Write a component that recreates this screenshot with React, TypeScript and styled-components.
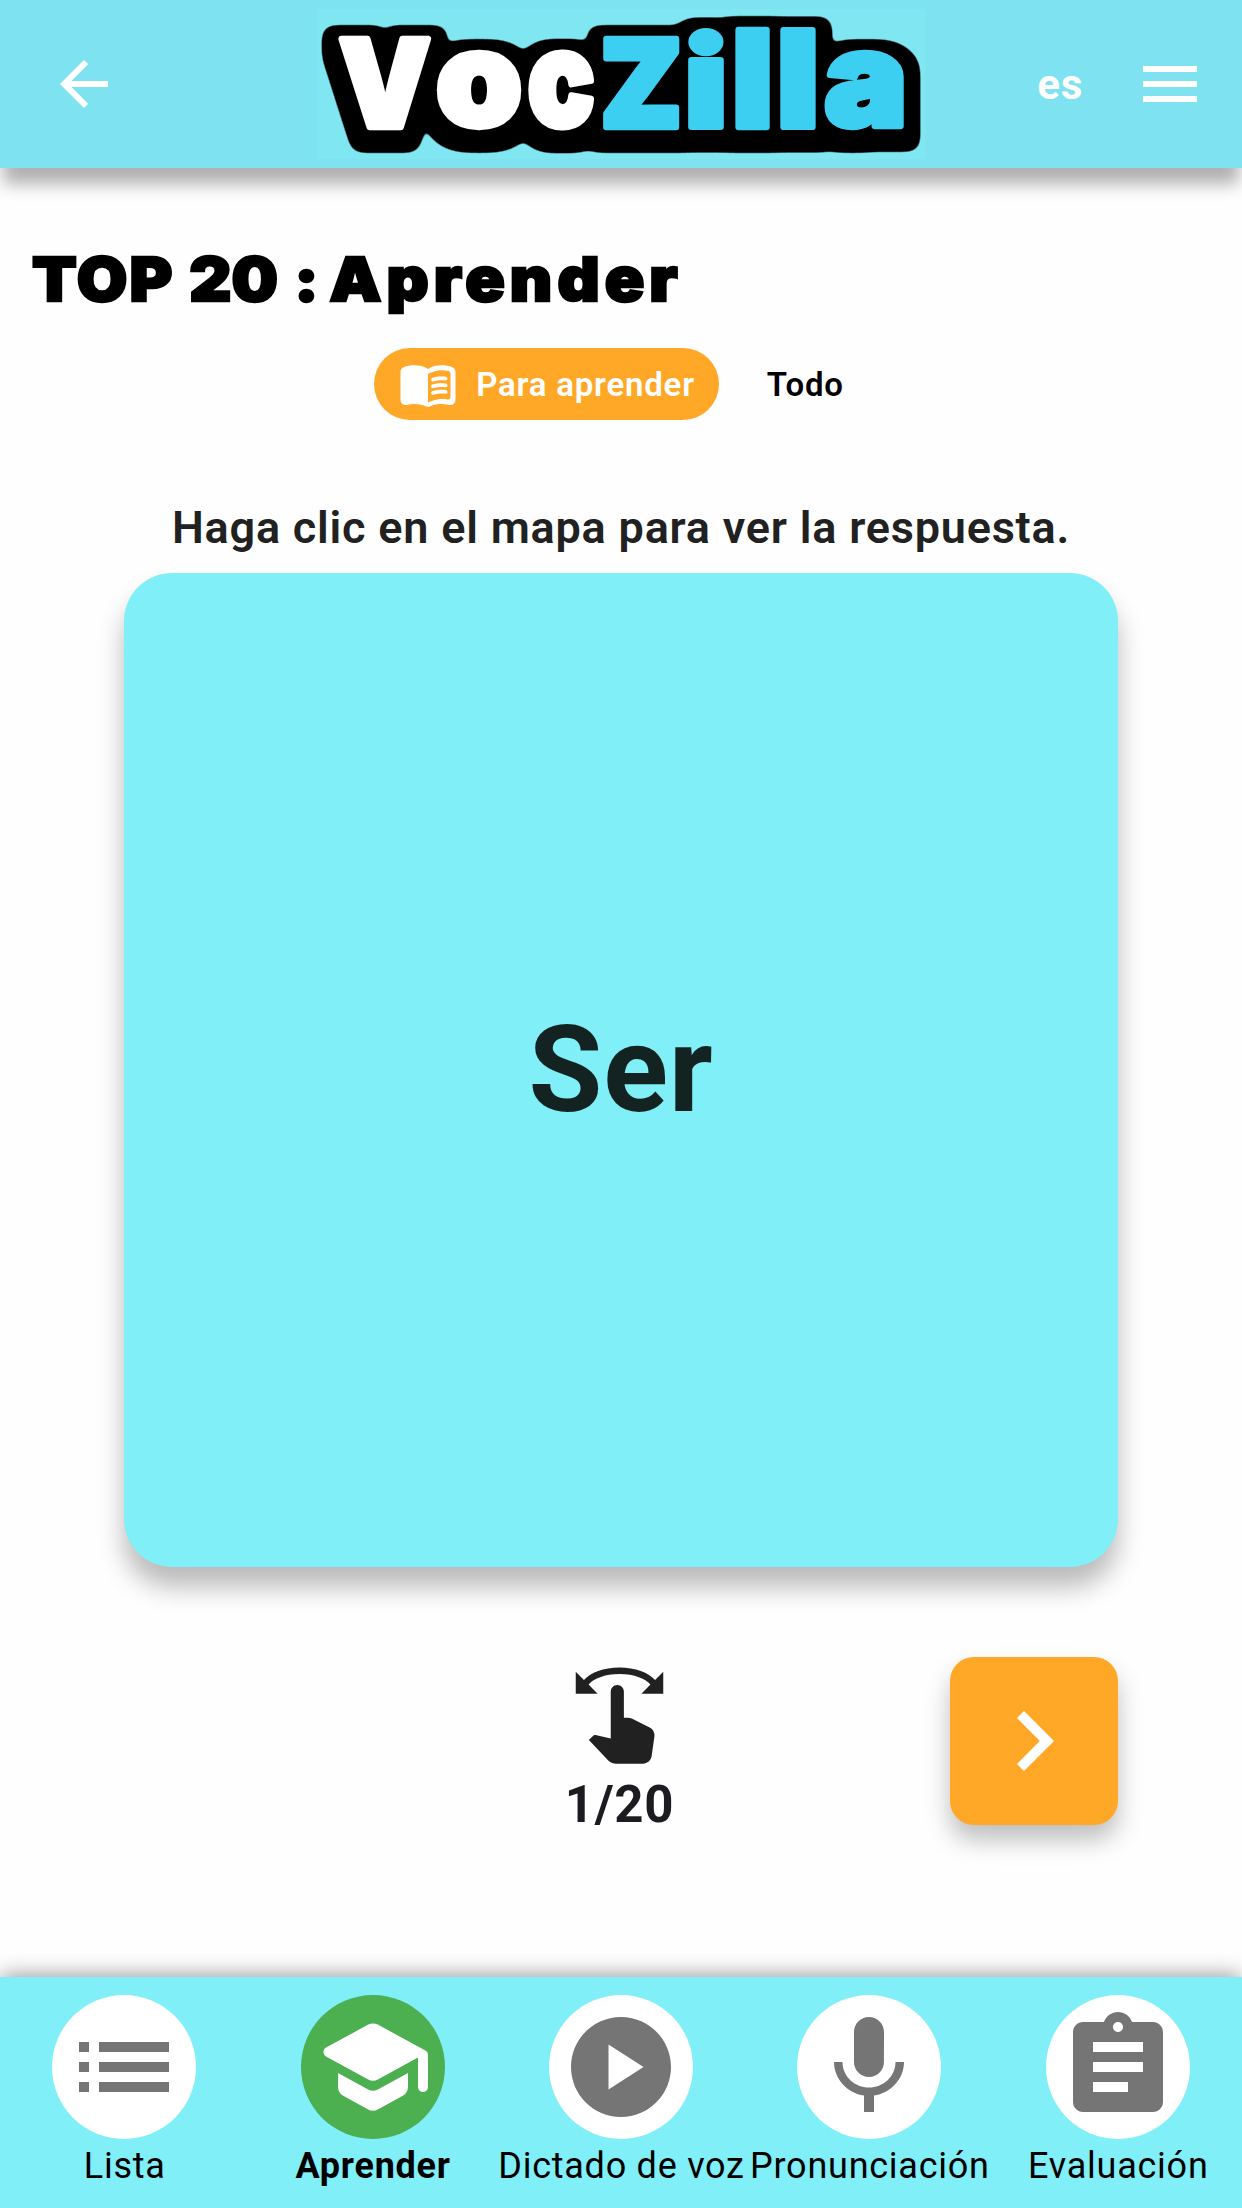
import React, { useMemo } from 'react';
import styled, { createGlobalStyle } from 'styled-components';

const GlobalStyle = createGlobalStyle`
  *, *::before, *::after { box-sizing: border-box; }
  html, body { margin: 0; padding: 0; background: #fefefe; }
  body { font-family: Roboto, sans-serif; letter-spacing: 0.75px; }
  button { font: inherit; letter-spacing: inherit; color: inherit; background: none; border: 0; padding: 0; }
`;

const Screen = styled.div`
  width: 1242px;
  height: 2208px;
  display: flex;
  flex-direction: column;
  background: #fefefe;
  overflow: hidden;
`;

const Header = styled.header`
  height: 168px;
  flex: none;
  display: grid;
  grid-template-columns: 317px 608px 1fr;
  align-items: center;
  background: #7ee2f0;
  box-shadow: 0 19px 16px -3px rgba(0, 0, 0, 0.31);
`;

const BackButton = styled.button`
  display: flex;
  margin-left: 48px;
  color: #fff;
`;

const LogoPlate = styled.div`
  height: 150px;
  display: flex;
  background: #80e7f2;
`;

const HeaderActions = styled.div`
  display: flex;
  align-items: center;
  justify-content: flex-end;
  padding-right: 36px;
  gap: 51px;
  color: #fff;
`;

const Language = styled.span`
  font-size: 42px;
  line-height: 48px;
  font-weight: 700;
  padding-top: 2px;
`;

const Icon = styled.svg<{ $size: number }>`
  width: ${(p) => p.$size}px;
  height: ${(p) => p.$size}px;
  display: block;
  flex: none;
  fill: currentColor;
`;

const Main = styled.main`
  flex: 1;
  display: flex;
  flex-direction: column;
  align-items: center;
`;

const Title = styled.h1`
  align-self: stretch;
  margin: 69px 0 0 32px;
  height: 84px;
  display: flex;
  font-family: Inter, sans-serif;
  font-weight: 900;
  font-size: 61px;
  line-height: 84px;
  color: #000;
  white-space: pre;
  -webkit-text-stroke: 2.5px #000;
  stroke-linejoin: round;
  paint-order: stroke fill;
  transform: scaleX(1.07);
  transform-origin: left center;
`;

const Word = styled.span<{ $spacing: number; $width: number }>`
  width: ${(p) => p.$width}px;
  letter-spacing: ${(p) => p.$spacing}px;
`;

const Filters = styled.div`
  margin-top: 27px;
  display: flex;
  gap: 24px;
`;

const Chip = styled.button<{ $active?: boolean }>`
  height: 72px;
  padding: 0 24px;
  display: flex;
  align-items: center;
  gap: 18px;
  border-radius: 36px;
  background: ${(p) => (p.$active ? '#ffa828' : 'transparent')};
  color: ${(p) => (p.$active ? '#fff' : '#000')};
  font-size: 33px;
  font-weight: 600;
  letter-spacing: 0.8px;
`;

const Hint = styled.p`
  margin: 78px 0 0;
  height: 75px;
  line-height: 60px;
  font-size: 45px;
  font-weight: 600;
  letter-spacing: 0.79px;
  color: #212121;
  white-space: nowrap;
`;

const Card = styled.section`
  width: 993.6px;
  height: 993.6px;
  flex: none;
  display: flex;
  align-items: center;
  justify-content: center;
  border-radius: 48px;
  background: #80eff7;
  box-shadow: 0 20px 26px rgba(0, 0, 0, 0.27);
  color: #122322;
  font-size: 120px;
  font-weight: 700;
`;

const Controls = styled.div`
  width: 993.6px;
  margin-top: 90px;
  display: grid;
  grid-template-columns: 168px 1fr 168px;
  align-items: start;
`;

const Progress = styled.div`
  grid-column: 2;
  padding: 6px 3px 0 0;
  display: flex;
  flex-direction: column;
  align-items: center;
  color: #212121;
`;

const Counter = styled.span`
  margin-top: 1px;
  font-size: 51px;
  line-height: 72px;
  font-weight: 700;
  color: #1c1b1f;
`;

const NextButton = styled.button`
  width: 168px;
  height: 168px;
  display: flex;
  align-items: center;
  justify-content: center;
  border-radius: 24px;
  background: #ffa828;
  color: #fff;
  box-shadow: 0 15px 24px rgba(0, 0, 0, 0.25);
`;

const NavBar = styled.nav`
  height: 231px;
  flex: none;
  display: grid;
  grid-template-columns: repeat(5, 1fr);
  padding-top: 18px;
  background: #80eff7;
  box-shadow: 0 -3px 20px -1px rgba(0, 0, 0, 0.4);
`;

const NavItem = styled.div`
  min-width: 0;
  display: flex;
  flex-direction: column;
  align-items: center;
`;

const NavCircle = styled.div<{ $active?: boolean }>`
  width: 144px;
  height: 144px;
  display: flex;
  align-items: center;
  justify-content: center;
  border-radius: 50%;
  background: ${(p) => (p.$active ? '#4caf50' : '#fff')};
  color: ${(p) => (p.$active ? '#fff' : '#757575')};
`;

const NavLabel = styled.span<{ $active?: boolean }>`
  margin: 2px 0 0 1px;
  font-size: 36px;
  line-height: 51px;
  font-weight: ${(p) => (p.$active ? 700 : 400)};
  color: #000;
  white-space: nowrap;
`;

const PATHS = {
  back: 'M20 11H7.83l5.59-5.59L12 4l-8 8 8 8 1.41-1.41L7.83 13H20v-2z',
  menu: 'M3 18h18v-2H3v2zm0-5h18v-2H3v2zm0-7v2h18V6H3z',
  book:
    'M17.5 4.5c-1.95 0-4.05.4-5.5 1.5-1.45-1.1-3.55-1.5-5.5-1.5-1.45 0-2.99.22-4.28.79C1.49 5.62 1 6.33 1 7.14v11.28c0 1.3 1.22 2.26 2.48 1.94.98-.25 2.02-.36 3.02-.36 1.56 0 3.22.26 4.56.92.6.3 1.28.3 1.87 0 1.34-.67 3-.92 4.56-.92 1 0 2.04.11 3.02.36 1.26.33 2.48-.63 2.48-1.94V7.14c0-.81-.49-1.52-1.22-1.85-1.28-.57-2.82-.79-4.27-.79zM21 17.23c0 .63-.58 1.09-1.2.98-.75-.14-1.53-.2-2.3-.2-1.7 0-4.15.65-5.5 1.5V8c1.35-.85 3.8-1.5 5.5-1.5.92 0 1.83.09 2.7.28.46.1.8.51.8.98v9.47z' +
    ['11.01', '13.67', '16.33']
      .map(
        (y) =>
          `M13.98 ${y}c-.32 0-.61-.2-.71-.52-.13-.39.09-.82.48-.94 1.54-.5 3.53-.66 5.36-.45.41.05.71.42.66.83-.05.41-.42.71-.83.66-1.62-.19-3.39-.04-4.73.39-.08.01-.16.03-.23.03z`,
      )
      .join(''),
  swipe:
    'M18.89 14.75l-4.09-2.04c-.28-.14-.58-.21-.89-.21H13v-6c0-.83-.67-1.5-1.5-1.5S10 5.67 10 6.5v10.74l-3.25-.74c-.33-.07-.68.03-.92.28l-.83.84 4.54 4.79c.38.38 1.14.59 1.67.59h6.16c1 0 1.84-.73 1.98-1.72l.63-4.46c.12-.85-.32-1.69-1.09-2.07zM20.13 3.87C18.69 2.17 15.6 1 12 1S5.31 2.17 3.87 3.87L2 2v5h5L4.93 4.93c1-1.29 3.7-2.43 7.07-2.43s6.07 1.14 7.07 2.43L17 7h5V2l-1.87 1.87z',
  chevron: 'M10 6L8.59 7.41 13.17 12l-4.58 4.59L10 18l6-6z',
  list: 'M3 13h2v-2H3v2zm0 4h2v-2H3v2zm0-8h2V7H3v2zm4 4h14v-2H7v2zm0 4h14v-2H7v2zM7 7v2h14V7H7z',
  school:
    'M5 13.18v2.81c0 .73.4 1.41 1.04 1.76l5 2.73c.6.33 1.32.33 1.92 0l5-2.73c.64-.35 1.04-1.03 1.04-1.76v-2.81l-6.04 3.3c-.6.33-1.32.33-1.92 0L5 13.18zm6.04-9.66l-8.43 4.6c-.69.38-.69 1.38 0 1.76l8.43 4.6c.6.33 1.32.33 1.92 0L21 10.09V16c0 .55.45 1 1 1s1-.45 1-1V9.59c0-.37-.2-.7-.52-.88l-9.52-5.19c-.6-.32-1.32-.32-1.92 0z',
  play: 'M12 2C6.48 2 2 6.48 2 12s4.48 10 10 10 10-4.48 10-10S17.52 2 12 2zm-2.5 14.5v-9l7 4.5-7 4.5z',
  mic: 'M12 14c1.66 0 2.99-1.34 2.99-3L15 5c0-1.66-1.34-3-3-3S9 3.34 9 5v6c0 1.66 1.34 3 3 3zm5.3-3c0 3-2.54 5.1-5.3 5.1S6.7 14 6.7 11H5c0 3.41 2.72 6.23 6 6.72V21h2v-3.28c3.28-.48 6-3.3 6-6.72h-1.7z',
  assignment:
    'M19 3h-4.18C14.4 1.84 13.3 1 12 1c-1.3 0-2.4.84-2.82 2H5c-1.1 0-2 .9-2 2v14c0 1.1.9 2 2 2h14c1.1 0 2-.9 2-2V5c0-1.1-.9-2-2-2zm-7 0c.55 0 1 .45 1 1s-.45 1-1 1-1-.45-1-1 .45-1 1-1zm2 14H7v-2h7v2zm3-4H7v-2h10v2zm0-4H7V7h10v2z',
};

type IconName = keyof typeof PATHS;

const MaterialIcon = ({ name, size }: { name: IconName; size: number }) => (
  <Icon $size={size} viewBox="0 0 24 24" aria-hidden="true">
    <path d={PATHS[name]} />
  </Icon>
);

/* Each logo letter is fitted into its own box: left, right, top, bottom. */
const LOGO: [string, number, number, number, number][] = [
  ['V', 21, 115, 26, 121],
  ['o', 120, 205, 42, 122],
  ['c', 211, 278, 42, 122],
  ['Z', 285, 363, 26, 121],
  ['i', 370, 407, 17, 121],
  ['l', 417, 453, 17, 121],
  ['l', 462, 499, 17, 121],
  ['a', 507, 587, 42, 122],
];
const LETTER_FATTEN = 6.5;

const LogoArt = styled.svg`
  display: block;
  overflow: visible;
`;

const LogoText = styled.text`
  font-family: Inter, sans-serif;
  font-weight: 900;
  font-size: 100px;
  letter-spacing: 0;
  stroke-linejoin: round;
`;

function useFittedLetters() {
  return useMemo(() => {
    const ctx = document.createElement('canvas').getContext('2d')!;
    ctx.font = '900 100px Inter, sans-serif';
    return LOGO.map(([char, left, right, top, bottom]) => {
      const m = ctx.measureText(char);
      const inset = LETTER_FATTEN / 2;
      const sx = (right - left - 2 * inset) / (m.actualBoundingBoxRight + m.actualBoundingBoxLeft);
      const sy = (bottom - top - 2 * inset) / (m.actualBoundingBoxAscent + m.actualBoundingBoxDescent);
      return {
        char,
        sx,
        sy,
        x: left + inset + m.actualBoundingBoxLeft * sx,
        y: bottom - inset - m.actualBoundingBoxDescent * sy,
      };
    });
  }, []);
}

const Logo = () => {
  const letters = useFittedLetters();
  return (
    <LogoArt width="608" height="150" viewBox="0 0 608 150" role="img" aria-label="VocZilla">
      {/* Black rim: letters grown, rounded off and dropped a little below themselves. */}
      <filter
        id="rim"
        filterUnits="userSpaceOnUse"
        x="-20"
        y="-20"
        width="648"
        height="190"
        colorInterpolationFilters="sRGB"
      >
        <feMorphology in="SourceAlpha" operator="dilate" radius="11 11" result="grown" />
        <feGaussianBlur in="grown" stdDeviation="5.5" result="soft" />
        <feComponentTransfer in="soft" result="round">
          <feFuncA type="linear" slope="16" intercept="-1.8" />
        </feComponentTransfer>
        <feOffset in="round" dy="6" result="rim" />
        <feMerge>
          <feMergeNode in="rim" />
          <feMergeNode in="SourceGraphic" />
        </feMerge>
      </filter>
      <g filter="url(#rim)">
        {letters.map((l, i) => {
          const color = i < 3 ? '#fff' : '#3dcff2';
          return (
            <LogoText
              key={i}
              transform={`translate(${l.x} ${l.y}) scale(${l.sx} ${l.sy})`}
              fill={color}
              stroke={color}
              strokeWidth={LETTER_FATTEN / Math.sqrt(l.sx * l.sy)}
            >
              {l.char}
            </LogoText>
          );
        })}
      </g>
    </LogoArt>
  );
};

const NAV: { icon: IconName; label: string; active?: boolean }[] = [
  { icon: 'list', label: 'Lista' },
  { icon: 'school', label: 'Aprender', active: true },
  { icon: 'play', label: 'Dictado de voz' },
  { icon: 'mic', label: 'Pronunciación' },
  { icon: 'assignment', label: 'Evaluación' },
];

export default function App() {
  return (
    <>
      <GlobalStyle />
      <Screen>
        <Header>
          <BackButton aria-label="Atrás">
            <MaterialIcon name="back" size={72} />
          </BackButton>
          <LogoPlate>
            <Logo />
          </LogoPlate>
          <HeaderActions>
            <Language>es</Language>
            <MaterialIcon name="menu" size={72} />
          </HeaderActions>
        </Header>
        <Main>
          <Title>
            <Word $width={147} $spacing={2}>TOP </Word>
            <Word $width={98} $spacing={0}>20 </Word>
            <Word $width={33} $spacing={0}>: </Word>
            <Word $width={345} $spacing={4.8}>Aprender</Word>
          </Title>
          <Filters>
            <Chip $active>
              <MaterialIcon name="book" size={60} />
              Para aprender
            </Chip>
            <Chip>Todo</Chip>
          </Filters>
          <Hint>Haga clic en el mapa para ver la respuesta.</Hint>
          <Card>Ser</Card>
          <Controls>
            <Progress>
              <MaterialIcon name="swipe" size={105} />
              <Counter>1/20</Counter>
            </Progress>
            <NextButton aria-label="Siguiente">
              <MaterialIcon name="chevron" size={120} />
            </NextButton>
          </Controls>
        </Main>
        <NavBar>
          {NAV.map((item) => (
            <NavItem key={item.label}>
              <NavCircle $active={item.active}>
                <MaterialIcon name={item.icon} size={120} />
              </NavCircle>
              <NavLabel $active={item.active}>{item.label}</NavLabel>
            </NavItem>
          ))}
        </NavBar>
      </Screen>
    </>
  );
}
